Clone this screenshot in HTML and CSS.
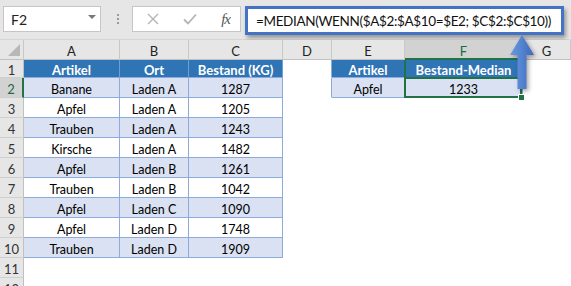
FILE: index.html
```html
<!DOCTYPE html>
<html lang="de">
<head>
  <meta charset="UTF-8">
  <title>Median mit Bedingung</title>
  <link rel="stylesheet" href="styles.css">
</head>
<body>

  <!-- Bearbeitungsleiste -->
  <div class="formula-bar">
    <div class="name-box"><span>F2</span><span class="caret"></span></div>
    <div class="grip"><i></i><i></i><i></i></div>
    <div class="fx-box">
      <svg width="12" height="12" viewBox="0 0 12 12"><path d="M1 1L11 11M11 1L1 11" stroke="#b4b4b4" stroke-width="1.4" fill="none"/></svg>
      <svg width="14" height="12" viewBox="0 0 14 12"><path d="M1 6.5L5 10.5L13 1.5" stroke="#b4b4b4" stroke-width="1.8" fill="none"/></svg>
      <span class="fx">fx</span>
    </div>
    <div class="formula-input">=MEDIAN(WENN($A$2:$A$10=$E2; $C$2:$C$10))</div>
  </div>

  <!-- Tabelle -->
  <div class="sheet">
    <div class="ch corner"><span class="tri"></span></div>
    <div class="ch">A</div>
    <div class="ch">B</div>
    <div class="ch">C</div>
    <div class="ch">D</div>
    <div class="ch">E</div>
    <div class="ch ch-sel">F</div>
    <div class="ch">G</div>

    <div class="rh">1</div>
    <div class="th">Artikel</div>
    <div class="th">Ort</div>
    <div class="th">Bestand (KG)</div>
    <div class="cell edge"></div>
    <div class="th">Artikel</div>
    <div class="th col-sel">Bestand-Median</div>
    <div class="cell"></div>

    <div class="rh rh-sel">2</div>
    <div class="td band">Banane</div>
    <div class="td band">Laden A</div>
    <div class="td band">1287</div>
    <div class="cell edge"></div>
    <div class="td band">Apfel</div>
    <div class="td band active">1233</div>
    <div class="cell"></div>

    <div class="rh">3</div>
    <div class="td">Apfel</div>
    <div class="td">Laden A</div>
    <div class="td">1205</div>
    <div class="cell"></div><div class="cell"></div><div class="cell"></div><div class="cell"></div>

    <div class="rh">4</div>
    <div class="td band">Trauben</div>
    <div class="td band">Laden A</div>
    <div class="td band">1243</div>
    <div class="cell"></div><div class="cell"></div><div class="cell"></div><div class="cell"></div>

    <div class="rh">5</div>
    <div class="td">Kirsche</div>
    <div class="td">Laden A</div>
    <div class="td">1482</div>
    <div class="cell"></div><div class="cell"></div><div class="cell"></div><div class="cell"></div>

    <div class="rh">6</div>
    <div class="td band">Apfel</div>
    <div class="td band">Laden B</div>
    <div class="td band">1261</div>
    <div class="cell"></div><div class="cell"></div><div class="cell"></div><div class="cell"></div>

    <div class="rh">7</div>
    <div class="td">Trauben</div>
    <div class="td">Laden B</div>
    <div class="td">1042</div>
    <div class="cell"></div><div class="cell"></div><div class="cell"></div><div class="cell"></div>

    <div class="rh">8</div>
    <div class="td band">Apfel</div>
    <div class="td band">Laden C</div>
    <div class="td band">1090</div>
    <div class="cell"></div><div class="cell"></div><div class="cell"></div><div class="cell"></div>

    <div class="rh">9</div>
    <div class="td">Apfel</div>
    <div class="td">Laden D</div>
    <div class="td">1748</div>
    <div class="cell"></div><div class="cell"></div><div class="cell"></div><div class="cell"></div>

    <div class="rh">10</div>
    <div class="td band">Trauben</div>
    <div class="td band">Laden D</div>
    <div class="td band">1909</div>
    <div class="cell"></div><div class="cell"></div><div class="cell"></div><div class="cell"></div>

    <div class="rh">11</div>
    <div class="cell"></div><div class="cell"></div><div class="cell"></div><div class="cell"></div>
    <div class="cell"></div><div class="cell"></div><div class="cell"></div>

    <div class="rh">12</div>
    <div class="cell"></div><div class="cell"></div><div class="cell"></div><div class="cell"></div>
    <div class="cell"></div><div class="cell"></div><div class="cell"></div>
  </div>

  <!-- Pfeil zur Formel -->
  <svg class="arrow" width="36" height="64" viewBox="0 0 36 64">
    <defs>
      <linearGradient id="arrowFill" x1="0" y1="0" x2="1" y2="0">
        <stop offset="0" stop-color="#6b9ae0"/>
        <stop offset="1" stop-color="#3b6abf"/>
      </linearGradient>
    </defs>
    <path d="M15 2L27 22L19.5 22L19.5 56L10.5 56L10.5 22L3 22Z" fill="url(#arrowFill)"/>
  </svg>

</body>
</html>
```

FILE: styles.css
```css
body {
  margin: 0;
  background-color: #ffffff;
  font-family: 'Lato', 'Liberation Sans', sans-serif;
  color: #000000;
  width: 571px;
  height: 286px;
  overflow: hidden;
  position: relative;
}

/* Bearbeitungsleiste */
.formula-bar {
  display: flex;
  align-items: flex-start;
  height: 40px;
  box-sizing: border-box;
  background-color: #e6e6e6;
  padding: 6px 0 0 3px;
  border-bottom: 1px solid #d6d6d6;
}

.name-box {
  width: 98px;
  height: 26px;
  box-sizing: border-box;
  border: 1px solid #c6c6c6;
  background-color: #fff;
  display: flex;
  align-items: center;
  justify-content: space-between;
  padding: 0 4px 0 7px;
  font-size: 14px;
  color: #222;
}

.caret {
  width: 0;
  height: 0;
  border-left: 4px solid transparent;
  border-right: 4px solid transparent;
  border-top: 4px solid #777;
  margin-bottom: 4px;
}

.grip {
  display: flex;
  flex-direction: column;
  gap: 2px;
  margin: 8px 13px 0 16px;
}

.grip i {
  display: block;
  width: 2px;
  height: 2px;
  background-color: #9a9a9a;
}

.fx-box {
  width: 109px;
  height: 26px;
  box-sizing: border-box;
  border: 1px solid #c6c6c6;
  background-color: #fff;
  display: flex;
  align-items: center;
  padding: 0 10px 0 12px;
  justify-content: space-between;
}

.fx-box svg:first-child {
  margin-left: 2px;
}

.fx {
  font-family: 'Liberation Serif', serif;
  font-style: italic;
  font-size: 15px;
  color: #555;
  letter-spacing: -1px;
}

.formula-input {
  margin-left: 4px;
  width: 319px;
  height: 29px;
  box-sizing: border-box;
  border: 3px solid #4472c4;
  background-color: #fff;
  box-shadow: 2px 3px 4px rgba(0, 0, 0, 0.35);
  font-size: 13.5px;
  letter-spacing: -0.35px;
  line-height: 24px;
  padding-left: 8px;
  color: #111;
  white-space: nowrap;
  overflow: hidden;
}

/* Tabellenblatt */
.sheet {
  display: grid;
  grid-template-columns: 24px 96px 69px 94px 49px 73px 118px 1fr;
  grid-template-rows: 20px 18px repeat(11, 20px);
  font-size: 12.5px;
}

.sheet > div {
  box-sizing: border-box;
  border-right: 1px solid transparent;
  border-bottom: 1px solid transparent;
  padding-top: 3px;
  display: flex;
  align-items: center;
  justify-content: center;
  white-space: nowrap;
}

.sheet > .ch {
  background-color: #e6e6e6;
  border-right-color: #c8c8c8;
  border-bottom-color: #c0c0c0;
  color: #222;
  font-size: 13px;
}

.sheet > .corner {
  position: relative;
}

.tri {
  position: absolute;
  right: 3px;
  bottom: 3px;
  width: 0;
  height: 0;
  border-left: 12px solid transparent;
  border-bottom: 12px solid #b8b8b8;
}

.sheet > .ch-sel {
  background-color: #d2d2d2;
  border-bottom: 2px solid #217346;
  color: #1e6b40;
}

.sheet > .rh {
  background-color: #e6e6e6;
  border-right-color: #c0c0c0;
  border-bottom-color: #cfcfcf;
  color: #333;
  font-size: 13px;
}

.sheet > .rh-sel {
  background-color: #d2d2d2;
  border-right: 2px solid #217346;
  color: #1e6b40;
}

.sheet > .th {
  background-color: #2f75b5;
  color: #fff;
  font-weight: bold;
  font-size: 13px;
  padding-top: 2px;
  border-right-color: #6f9fd0;
  border-bottom-color: #8eaadb;
}

.sheet > .td {
  border-right-color: #8eaadb;
  border-bottom-color: #8eaadb;
}

.sheet > .band {
  background-color: #d9e1f2;
}

.sheet > .edge {
  border-right-color: #8eaadb;
}

.sheet > .col-sel {
  position: relative;
}

.col-sel::after {
  content: "";
  position: absolute;
  top: 0;
  bottom: -1px;
  left: -1px;
  right: 0;
  border-left: 2px solid #217346;
  border-right: 2px solid #217346;
}

.sheet > .active {
  position: relative;
}

.active::after {
  content: "";
  position: absolute;
  top: -1px;
  bottom: -1px;
  left: -1px;
  right: 0;
  border: 2px solid #217346;
}

.active::before {
  content: "";
  position: absolute;
  right: -3px;
  bottom: -4px;
  width: 5px;
  height: 5px;
  background-color: #217346;
  border: 1px solid #fff;
  z-index: 2;
}

/* Pfeil */
.arrow {
  position: absolute;
  left: 507px;
  top: 33px;
  filter: drop-shadow(2px 2px 2px rgba(0, 0, 0, 0.35));
}
```
